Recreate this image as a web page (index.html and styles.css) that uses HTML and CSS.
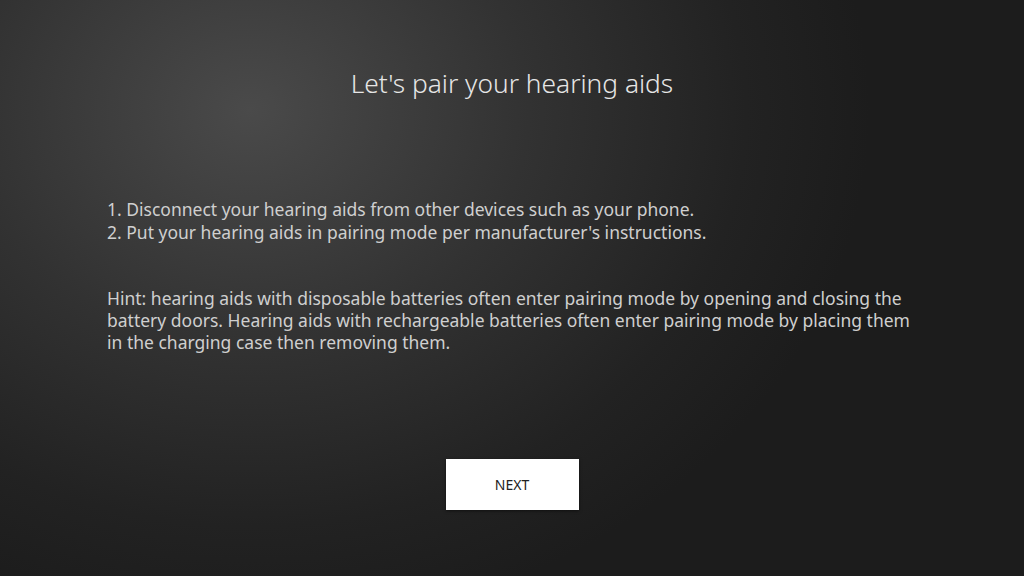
FILE: index.html
```html
<!DOCTYPE html>
<html lang="en">
<head>
<meta charset="utf-8">
<title>Let's pair your hearing aids</title>
<link rel="stylesheet" href="styles.css">
</head>
<body>
<main class="screen">
  <h1 class="title">Let's pair your hearing aids</h1>
  <ol class="steps">
    <li>1. Disconnect your hearing aids from other devices such as your phone.</li>
    <li>2. Put your hearing aids in pairing mode per manufacturer's instructions.</li>
  </ol>
  <p class="hint">Hint: hearing aids with disposable batteries often enter pairing mode by opening and closing the battery doors. Hearing aids with rechargeable batteries often enter pairing mode by placing them in the charging case then removing them.</p>
  <div class="actions">
    <button class="btn">NEXT</button>
  </div>
</main>
</body>
</html>
```
FILE: styles.css
```css
html, body {
  margin: 0;
  padding: 0;
  width: 1024px;
  height: 576px;
  overflow: hidden;
}
body {
  background: radial-gradient(ellipse 620px 520px at 250px 110px, #4a4a4a 0%, #323232 45%, #222222 80%, #1c1c1c 100%);
  font-family: "Noto Sans", "Open Sans", sans-serif;
  color: #cfcfcf;
}
.screen {
  display: flex;
  flex-direction: column;
  padding: 66px 107px 0 107px;
  box-sizing: border-box;
  height: 576px;
}
.title {
  margin: 0;
  text-align: center;
  font-size: 26.3px;
  font-weight: 300;
  line-height: 34px;
  color: #e6e6e6;
}
.steps {
  list-style: none;
  margin: 98px 0 0 0;
  padding: 0;
  font-size: 17.5px;
  line-height: 23px;
}
.hint {
  margin: 43px 0 0 0;
  font-size: 17.5px;
  line-height: 22px;
  max-width: 815px;
}
.actions {
  display: flex;
  justify-content: center;
  margin-top: 106px;
}
.btn {
  width: 133px;
  height: 51px;
  border: none;
  background: #ffffff;
  color: #222;
  font-family: "Noto Sans", "Open Sans", sans-serif;
  font-size: 14px;
  box-shadow: 0 1px 3px rgba(0,0,0,0.5);
  padding: 0;
}
```
